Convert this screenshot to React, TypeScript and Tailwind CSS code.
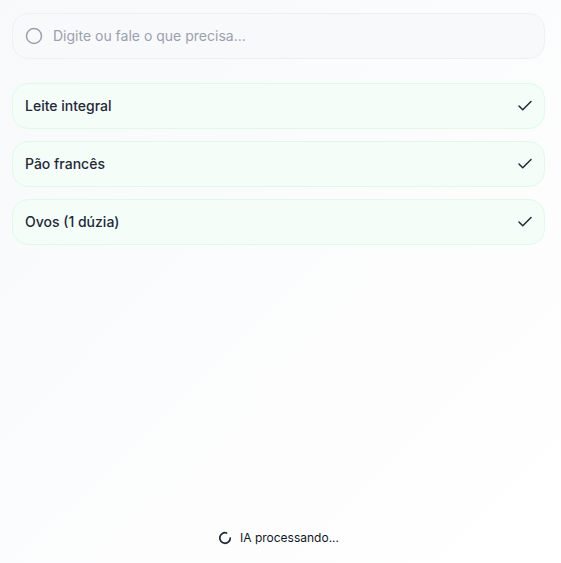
import { Check, Circle, LoaderCircle } from "lucide-react";

const ITEMS = ["Leite integral", "Pão francês", "Ovos (1 dúzia)"];

export default function App() {
  return (
    <div
      className="flex min-h-screen flex-col bg-gradient-to-br from-[#f8f9fb] to-white pl-3 pr-4 pt-[13px]"
      style={{ fontFamily: "Inter, 'Noto Sans', sans-serif" }}
    >
      <div className="flex h-[46px] items-center gap-2.5 rounded-2xl border border-[#eef0f3] bg-[#f8f9fb] px-3">
        <Circle size={18} strokeWidth={2} className="text-gray-400" />
        <span className="text-sm text-gray-400">Digite ou fale o que precisa...</span>
      </div>

      <div className="mt-6 flex flex-col gap-3">
        {ITEMS.map((item) => (
          <div
            key={item}
            className="flex h-[46px] items-center justify-between rounded-2xl border border-[#dcfce7] bg-[#f5fdf8] pl-3 pr-[10px]"
          >
            <span className="text-sm font-medium text-gray-800">{item}</span>
            <Check size={18} strokeWidth={2} className="text-gray-800" />
          </div>
        ))}
      </div>

      <div className="mt-auto flex items-center justify-center gap-2 pb-[17px]">
        <LoaderCircle size={14} strokeWidth={3} className="text-gray-800" />
        <span className="text-xs text-gray-900">IA processando...</span>
      </div>
    </div>
  );
}
